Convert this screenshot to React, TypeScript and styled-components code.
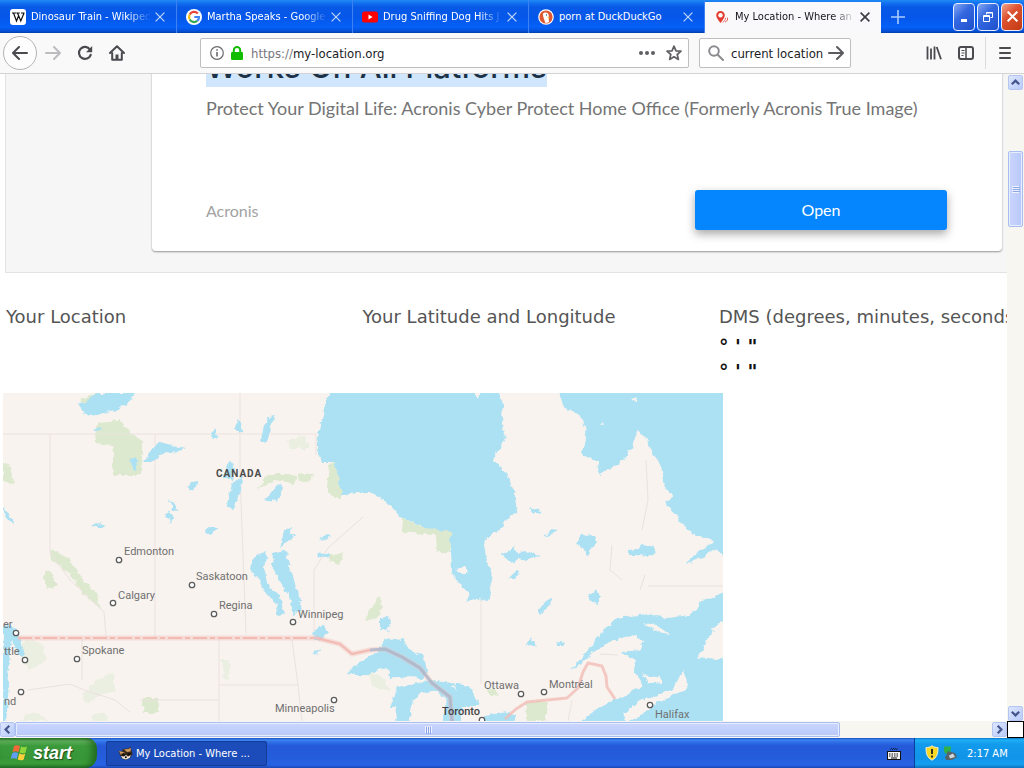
import React from "react";
import styled, { createGlobalStyle, css } from "styled-components";

const uiFont = '"DejaVu Sans Condensed", "Noto Sans", "Open Sans", sans-serif';
const adFont = 'Lato, "Open Sans", sans-serif';

const GlobalStyle = createGlobalStyle`
  * { box-sizing: border-box; }
  body { margin: 0; background: #fff; font-family: ${uiFont}; overflow: hidden; }
  button, input { font: inherit; color: inherit; border: 0; padding: 0; margin: 0; background: none; }
  svg { display: block; flex: none; }
`;

const Desktop = styled.div`
  display: flex;
  flex-direction: column;
  height: 100vh;
`;

/* ---------- tab strip ---------- */

const TabStrip = styled.div`
  display: flex;
  flex: none;
  height: 33px;
  padding-left: 1px;
  background: linear-gradient(#1e8af4 0, #1272f0 3px, #0859e6 7px, #0557ea 18px, #0561f8 27px, #0550d8 31px, #023fa8 33px);
`;

const TabItem = styled.div<{ $active?: boolean }>`
  display: flex;
  align-items: center;
  flex: 0 1 176px;
  min-width: 0;
  padding: 0 11px 0 9px;
  font-size: 11px;
  color: #fff;
  border-right: 1px solid #3f83f2;
  ${(p) =>
    p.$active &&
    css`
      margin-top: 2px;
      padding-bottom: 2px;
      background: #f9f9fb;
      color: #15141a;
      border-right: 0;
    `}
`;

const TabButton = styled.button`
  display: flex;
  align-items: center;
  gap: 5px;
  flex: 1;
  min-width: 0;
  text-align: left;
`;

const TabTitle = styled.span<{ $fade?: boolean }>`
  flex: 1;
  overflow: hidden;
  white-space: nowrap;
  ${(p) => p.$fade && "mask-image: linear-gradient(to right, #000 80%, transparent);"}
`;

const CloseTab = styled.button`
  margin-left: 4px;
`;

const NewTab = styled.button`
  width: 34px;
  display: grid;
  place-items: center;
`;

const WindowButtons = styled.div`
  display: flex;
  align-items: center;
  gap: 2px;
  margin-left: auto;
  padding-right: 1px;
`;

const WindowButton = styled.button<{ $danger?: boolean }>`
  display: grid;
  place-items: center;
  width: 22px;
  height: 28px;
  border: 1px solid #e8effc;
  border-radius: 4px;
  background: ${(p) =>
    p.$danger
      ? "linear-gradient(135deg, #f0a58c, #dd5230 40%, #c23a12)"
      : "linear-gradient(135deg, #86a9f3, #3468e0 40%, #1e50cc)"};
`;

/* ---------- toolbar ---------- */

const Toolbar = styled.div`
  display: flex;
  align-items: center;
  flex: none;
  height: 41px;
  padding: 0 3px;
  background: #f9f9fa;
  border-bottom: 1px solid #d3d3d5;
  color: #4a4a4f;
  font-size: 13px;
`;

const NavButtons = styled.div`
  display: flex;
  align-items: center;
  width: 197px;
`;

const IconButton = styled.button`
  display: grid;
  place-items: center;
  width: 32px;
  height: 32px;
`;

const StarButton = styled(IconButton)`
  width: 24px;
`;

const BackButton = styled(IconButton)`
  width: 34px;
  height: 34px;
  border: 1px solid #b4b4b7;
  border-radius: 50%;
  background: #fdfdfd;
`;

const Field = styled.div`
  display: flex;
  align-items: center;
  height: 30px;
  background: #fff;
  border: 1px solid #bfbfc2;
  border-radius: 2px;
  color: #1b1b1f;
  padding: 0 2px 0 9px;
`;

const UrlField = styled(Field)`
  flex: 1;
  gap: 7px;
  margin-right: 10px;
`;

const SearchField = styled(Field)`
  width: 152px;
  padding: 0 6px 0 8px;
`;

const UrlText = styled.span`
  display: flex;
  align-items: center;
  flex: 1;
  margin-left: 1px;
`;

const Scheme = styled.span`
  flex: none;
  color: #77777c;
`;

const TextInput = styled.input`
  flex: 1;
  min-width: 0;
  width: 40px;
  outline: 0;
`;

const SearchInput = styled(TextInput)`
  padding-left: 7px;
`;

const ToolGroup = styled.div`
  display: flex;
  align-items: center;
  margin-left: 67px;
`;

const Divider = styled.span`
  width: 1px;
  height: 32px;
  margin: 0 3px;
  background: #dcdcde;
`;

/* ---------- page ---------- */

const Viewport = styled.div`
  display: grid;
  grid-template: minmax(0, 1fr) 17px / minmax(0, 1fr) 17px;
  flex: 1;
  min-height: 0;
`;

const PageClip = styled.main`
  overflow: hidden;
  background: #fff;
`;

const AdBand = styled.section`
  margin: -41px 0 0 5px;
  padding: 0 5px 21px 146px;
  background: #f6f6f6;
  border: 1px solid #e3e3e3;
  border-right: 0;
`;

const AdCard = styled.article`
  padding: 13px 55px 21px 54px;
  background: #fff;
  border-radius: 4px;
  box-shadow: 0 1px 2px rgba(0, 0, 0, 0.4);
  font-family: ${adFont};
`;

const AdTitle = styled.h2`
  margin: 0;
  font: 500 31px/40px Inter, sans-serif;
  color: #1c3146;
`;

const Selected = styled.a`
  display: inline-block;
  background: #cfe6fd;
  color: inherit;
  text-decoration: none;
`;

const AdText = styled.p`
  margin: 9px 0 70px;
  font-size: 18px;
  line-height: 24px;
  color: #747474;
  white-space: nowrap;
`;

const AdFooter = styled.div`
  display: flex;
  align-items: center;
  justify-content: space-between;
  font-size: 16px;
  color: #a2a2a2;
`;

const OpenButton = styled.button`
  width: 252px;
  height: 40px;
  padding-bottom: 2px;
  border-radius: 3px;
  background: #0586ff;
  color: #fff;
  box-shadow: 0 4px 10px rgba(0, 0, 0, 0.35);
`;

const InfoGrid = styled.section`
  display: grid;
  grid-template-columns: repeat(3, 1fr);
  width: calc(106% + 8px);
  min-height: 120px;
  padding: 32px 0 5px 6px;
  font-family: "DejaVu Sans", sans-serif;
`;

const InfoTitle = styled.h3`
  margin: 0 0 5px;
  font-size: 18px;
  line-height: 24px;
  font-weight: 400;
  color: #555;
  white-space: nowrap;
`;

const Dms = styled.p`
  margin: 0;
  font-size: 19px;
  line-height: 25px;
  font-weight: 700;
  color: #111;
`;

const MapFrame = styled.figure`
  margin: 0 0 0 3px;
  font-family: "Roboto", sans-serif;
`;

/* ---------- scroll bars ---------- */

const Track = styled.div<{ $vertical?: boolean }>`
  display: flex;
  flex-direction: ${(p) => (p.$vertical ? "column" : "row")};
  background: #f7f6f1;
  ${(p) => (p.$vertical ? "padding: 1px 1px 0 1px;" : "padding: 1px 0;")}
`;

const arrowTurn = { up: 0, right: 90, down: 180, left: 270 };

const ScrollArrow = styled.button<{ $dir: keyof typeof arrowTurn }>`
  display: grid;
  place-items: center;
  flex: none;
  width: 15px;
  height: 15px;
  border: 1px solid #b4c5f3;
  border-radius: 2px;
  background: linear-gradient(135deg, #dde6ff, #b9cbf8);
  svg { transform: rotate(${(p) => arrowTurn[p.$dir]}deg); }
`;

const Thumb = styled.div<{ $vertical?: boolean }>`
  display: grid;
  place-items: center;
  border: 1px solid #a9bdf0;
  border-radius: 2px;
  box-shadow: inset 0 0 0 1px #e6edff;
  background: ${(p) =>
    p.$vertical ? "linear-gradient(90deg, #cad6fe, #b8c8f8)" : "linear-gradient(#cad6fe, #b8c8f8)"};
`;

const Space = styled.span<{ $grow: number }>`
  flex: ${(p) => p.$grow} 1 0;
`;

const VThumb = styled(Thumb)`
  flex: 74 1 0;
`;

const HThumb = styled(Thumb)`
  flex: 823 1 0;
`;

const Corner = styled.div`
  background: #fff;
  border: 1px solid #000;
`;

/* ---------- taskbar ---------- */

const Taskbar = styled.footer`
  display: flex;
  flex: none;
  height: 30px;
  background: linear-gradient(#1f4fc0 0, #3a86f0 2px, #2f6fe6 4px, #2459d8 8px, #245ddb 20px, #2663e4 27px, #1b47b4 30px);
  color: #fff;
  font-size: 11px;
`;

const StartButton = styled.button`
  display: flex;
  align-items: center;
  gap: 3px;
  width: 97px;
  padding-left: 10px;
  border-radius: 0 10px 12px 0;
  background: linear-gradient(#2c7d2b 0, #63b35f 3px, #3b9a3a 8px, #379637 20px, #3da03b 26px, #23762a 30px);
  box-shadow: inset -5px 0 6px rgba(20, 80, 20, 0.6);
  font: italic 700 18px "Liberation Sans", sans-serif;
  text-shadow: 1px 1px 1px #1d4d1d;
`;

const TaskButton = styled.button`
  display: flex;
  align-items: center;
  gap: 3px;
  width: 161px;
  height: 25px;
  margin: 3px 0 0 9px;
  padding-left: 11px;
  border: 1px solid #153c96;
  border-radius: 2px;
  background: #1c4cb9;
`;

const Keyboard = styled.span`
  display: grid;
  place-items: center;
  margin: 0 13px 0 auto;
`;

const Tray = styled.div`
  display: flex;
  align-items: center;
  gap: 4px;
  width: 110px;
  padding-left: 10px;
  border-left: 1px solid #0a3f97;
  background: linear-gradient(#0c79cc 0, #1fb0f5 2px, #129bec 6px, #1193e8 20px, #15a0f2 26px, #0d72bd 30px);
`;

const Clock = styled.time`
  margin-left: 6px;
`;

/* ---------- icons ---------- */

const Cross = ({ color, size = 10, weight = 1.3 }: { color: string; size?: number; weight?: number }) => (
  <svg width={size} height={size} viewBox="0 0 10 10" stroke={color} strokeWidth={weight}>
    <path d="M.6 .6 9.4 9.4M9.4 .6 .6 9.4" />
  </svg>
);

const Wikipedia = () => (
  <svg width="16" height="16" viewBox="0 0 16 16">
    <rect width="16" height="16" rx="3" fill="#fff" />
    <path d="M2 4h4M6.300 4h3.500M11 4h3.500M3.500 4l3 8 2-5M7.500 4l3.300 8L14 4" stroke="#111" strokeWidth="1.200" fill="none" />
  </svg>
);

const Google = () => (
  <svg width="16" height="16" viewBox="0 0 16 16">
    <circle cx="8" cy="8" r="8" fill="#fff" />
    <g fill="none" strokeWidth="2.200">
      <path d="M11.800 4.600A5 5 0 0 0 3.700 5.500" stroke="#ea4335" />
      <path d="M3.700 5.500a5 5 0 0 0 0 5" stroke="#fbbc05" />
      <path d="M3.700 10.500a5 5 0 0 0 7.500 1.400" stroke="#34a853" />
      <path d="M11.200 11.900A5 5 0 0 0 13 8H8.300" stroke="#4285f4" />
    </g>
  </svg>
);

const Youtube = () => (
  <svg width="16" height="16" viewBox="0 0 16 16">
    <rect y="2.500" width="16" height="11" rx="2.500" fill="#f00" />
    <path d="M6.500 5.600v4.800L10.600 8z" fill="#fff" />
  </svg>
);

const Duck = () => (
  <svg width="16" height="16" viewBox="0 0 16 16">
    <circle cx="8" cy="8" r="7.800" fill="#fff" />
    <circle cx="8" cy="8" r="6.600" fill="#de5833" />
    <path d="M5 4.600C6.500 2.600 10.600 3 10.800 6.500l-.2 2 .4 4.800-3.600.6C6.600 11.500 4.600 7.500 5 4.600z" fill="#fff" />
    <path d="M9.300 8.200l2.800.2-1.800 1.200z" fill="#fc3" />
    <circle cx="8.500" cy="6" r=".7" fill="#2d4f8e" />
  </svg>
);

const Pin = () => (
  <svg width="16" height="14" viewBox="-1 0 16 14">
    <path d="M5.500 13C3 9.500 1.200 7.600 1.200 5.200a4.300 4.300 0 0 1 8.600 0C9.800 7.600 8 9.500 5.500 13z" fill="#e33b2e" />
    <circle cx="5.500" cy="5.200" r="2.200" fill="#fff" />
    <path d="M8 12.500c1.500-2.500 2.500-2 2.500-4.500M12.500 7.500v2.800L10 12" stroke="#e8685d" fill="none" />
  </svg>
);

const Arrow = ({ color, flip }: { color: string; flip?: boolean }) => (
  <svg width="16" height="16" viewBox="0 0 16 16" fill="none" stroke={color} strokeWidth="2" strokeLinecap="round" strokeLinejoin="round">
    <path d={flip ? "M15 8H1M7 2 1 8l6 6" : "M1 8h14M9 2l6 6-6 6"} />
  </svg>
);

const Reload = () => (
  <svg width="16" height="16" viewBox="0 0 16 16">
    <path d="M13 4.600A6 6 0 1 0 13.700 9.800" fill="none" stroke="#4a4a4f" strokeWidth="2.200" strokeLinecap="round" />
    <path d="M15.200 1v6.200H9z" fill="#4a4a4f" />
  </svg>
);

const Home = () => (
  <svg width="16" height="16" viewBox="0 0 16 16" fill="none" stroke="#4a4a4f" strokeWidth="2" strokeLinecap="round" strokeLinejoin="round">
    <path d="M1 8 8 1.200 15 8M3.200 8v6.800h9.600V8" />
    <path d="M8 14V9.500" strokeWidth="3" strokeLinecap="butt" />
  </svg>
);

const Info = () => (
  <svg width="14" height="14" viewBox="0 0 14 14" fill="none" stroke="#6a6a6f">
    <circle cx="7" cy="7" r="6.300" strokeWidth="1.200" />
    <path d="M7 6v4.500M7 3.300v1.500" strokeWidth="1.600" />
  </svg>
);

const Lock = () => (
  <svg width="12" height="14" viewBox="0 0 12 14">
    <rect y="6" width="12" height="8" rx="1.200" fill="#12bc00" />
    <path d="M2.800 7V4.200a3.200 3.200 0 0 1 6.400 0V7" fill="none" stroke="#12bc00" strokeWidth="2" />
  </svg>
);

const Dots = () => (
  <svg width="16" height="16" viewBox="0 0 16 16" fill="#5f5f64">
    <circle cx="2" cy="8" r="2" />
    <circle cx="8" cy="8" r="2" />
    <circle cx="14" cy="8" r="2" />
  </svg>
);

const Star = () => (
  <svg width="16" height="16" viewBox="0 0 16 16" fill="none" stroke="#5f5f64" strokeWidth="1.700" strokeLinejoin="round">
    <path d="M8 1.200l2 4.600 5 .4-3.800 3.300 1.200 4.900L8 11.800l-4.400 2.600 1.200-4.900L1 6.200l5-.4z" />
  </svg>
);

const Magnifier = () => (
  <svg width="16" height="16" viewBox="0 0 16 16" fill="none" stroke="#8c8c90" strokeWidth="2" strokeLinecap="round">
    <circle cx="6" cy="6" r="4.800" />
    <path d="M9.700 9.700 15 15" />
  </svg>
);

const Library = () => (
  <svg width="16" height="16" viewBox="0 0 16 16" fill="none" stroke="#4a4a4f" strokeWidth="1.800">
    <path d="M1.500 1.500v13M5 3.500v11M8.500 1.500v13M10.700 2l4.300 12.300" />
  </svg>
);

const Sidebar = () => (
  <svg width="16" height="16" viewBox="0 0 16 16" fill="none" stroke="#4a4a4f">
    <rect x="1" y="2" width="14" height="12" rx="2" strokeWidth="2" />
    <path d="M8 2v12" strokeWidth="1.500" />
    <path d="M3.500 5.500h3M3.500 8h3M3.500 10.500h2" />
  </svg>
);

const Menu = () => (
  <svg width="12" height="14" viewBox="0 0 12 14" stroke="#4a4a4f" strokeWidth="2" strokeLinecap="round">
    <path d="M1 2h10M1 7h10M1 12h10" />
  </svg>
);

const Chevron = () => (
  <svg width="9" height="9" viewBox="0 0 9 9" fill="none" stroke="#44568c" strokeWidth="2.200">
    <path d="M.8 6.300 4.500 2.600 8.200 6.300" />
  </svg>
);

const Grip = ({ vertical }: { vertical?: boolean }) => (
  <svg width="8" height="8" viewBox="0 0 8 8" stroke="#eef3ff">
    <path d={vertical ? "M0 1h7M0 3h7M0 5h7M0 7h7" : "M1 0v7M3 0v7M5 0v7M7 0v7"} shapeRendering="crispEdges" />
    <path d={vertical ? "M1 2h7M1 4h7M1 6h7" : "M2 1v7M4 1v7M6 1v7"} stroke="#8ca5e6" shapeRendering="crispEdges" />
  </svg>
);

const WindowsFlag = () => (
  <svg width="20" height="20" viewBox="0 0 20 20">
    <path d="M4 3c2-1.300 4-1 6 0L8.500 9c-2-1-4-1.200-6 0z" fill="#ef6a38" />
    <path d="M11 3.600c2 1 4 1 6 0L15.500 9.400c-2 1.200-4 1-6 0z" fill="#8fd63a" />
    <path d="M2.200 10.200c2-1.200 4-1 6 0L6.700 16c-2-1-4-1-6 0z" fill="#5f9df5" />
    <path d="M9.200 10.600c2 1 4 1.200 6 0L13.700 16.400c-2 1.200-4 1-6 0z" fill="#fbd03b" />
  </svg>
);

const Raccoon = () => (
  <svg width="15" height="14" viewBox="0 0 15 14">
    <path d="M.5 4 4 4.500 5 2l5-.5L12.500 0l1 3L14.500 7 12 11l-4 2-4-1.500L2 8z" fill="#3a2a1c" />
    <path d="M1 4l4 1 2 1-4 2zM6 2.500l4-.5 3-1-.5 3.500L9 5z" fill="#d09a5e" />
    <path d="M3 7l3-1 1 2-2 1zM9 6.500l4-.5-1 2.500-2 0z" fill="#16110d" />
    <path d="M3 9l3 .5L8 8l2 1.500 3-1.500-1.500 3L8 12.500l-3.500-1z" fill="#efe6d8" />
    <circle cx="7.800" cy="10.300" r="1" />
  </svg>
);

const KeyboardIcon = () => (
  <svg width="14" height="13" viewBox="0 0 14 13">
    <path d="M3.500 2.500l1-1 1 1 1-1 1 1 1-1 1 1 1-1" stroke="#111" fill="none" />
    <rect x=".5" y="4.500" width="13" height="8" fill="#f4f4f4" stroke="#111" />
    <path d="M2 7h10M2 9h10" stroke="#111" strokeDasharray="1.500 1" />
    <path d="M4 11h6" stroke="#111" />
  </svg>
);

const Shield = () => (
  <svg width="14" height="16" viewBox="0 0 14 16">
    <path d="M7 .8c2 1.400 4 1.800 6 1.800 0 6-1 10-6 12.600C2 12.600 1 8.600 1 2.600c2 0 4-.4 6-1.800z" fill="#fbd722" stroke="#f3f0d2" />
    <path d="M7 4v5M7 10.500v2" stroke="#222" strokeWidth="1.800" />
  </svg>
);

const Device = () => (
  <svg width="14" height="16" viewBox="0 0 14 16">
    <path d="M1 6l4-1 3 2 4 1 2 4-5 3-6 0-1-3 2-2z" fill="#56636a" />
    <path d="M1 1.500h7L7.500 7 5 6 3.500 9 1 7z" fill="#2fb14a" />
    <path d="M6 10.500l4-2 2 3.500-5 1.500z" fill="#cfd8dc" />
  </svg>
);

/* ---------- map ---------- */

type City = { name: string; x: number; y: number; tx: number; ty: number };

const cities: City[] = [
  { name: "Edmonton", x: 119, y: 560, tx: 124, ty: 555 },
  { name: "Calgary", x: 113, y: 603, tx: 118, ty: 599 },
  { name: "Saskatoon", x: 192, y: 585, tx: 196, ty: 580 },
  { name: "Regina", x: 214, y: 614, tx: 219, ty: 609 },
  { name: "Winnipeg", x: 293, y: 622, tx: 298, ty: 618 },
  { name: "Spokane", x: 77, y: 659, tx: 82, ty: 654 },
  { name: "Minneapolis", x: 334, y: 700, tx: 275, ty: 712 },
  { name: "Ottawa", x: 521, y: 694, tx: 484, ty: 689 },
  { name: "Montréal", x: 544, y: 692, tx: 549, ty: 688 },
  { name: "Halifax", x: 650, y: 705, tx: 655, ty: 718 },
  { name: "er", x: 16, y: 633, tx: 3, ty: 628 },
  { name: "ttle", x: 25, y: 660, tx: 4, ty: 655 },
  { name: "nd", x: 21, y: 692, tx: 4, ty: 705 },
];

const lakes = [
  "M76 403L84 404 90 398 100 393H136L128 403 118 410 105 413 92 417 82 410z",
  "M143 462L152 450 160 442 172 445 186 448 178 452 162 454 150 462z",
  "M130 460l6-3 2 8-4 6z",
  "M93 429l8-3 3 3-8 2z",
  "M211 436l4-7 4 8-6 1z",
  "M234 430l4-11 5 14-5-2z",
  "M261 440l3-14 4-9 8-1-5 8-1 10-4 8z",
  "M222 478l8-18 4 8-2 12z",
  "M227 508l1-12 5-14 10-5-2 14-4 10-5 8z",
  "M265 501l6-8 9-10 3 6-5 10-10 3z",
  "M187 487l4-5 7-1-1 6-8 4z",
  "M168 499l6 4 5 8-6-1z",
  "M165 513l5-1 3 6-2 5z",
  "M90 525l14-1 2 3-13 0z",
  "M205 530l4-3 8 0-4 7-6 1z",
  "M3 505l5 8 7 11-8-5-4-7z",
  "M285 530l8-1-4 5 8 0-9 6-8 9 2-10z",
  "M320 538l6-3 5 1-5 4z",
  "M315 552l10 2 4 2-10 2z",
  "M285 550L273 553 272 567 278 580 290 597 293 615 302 610 298 590 290 567z",
  "M267 552L253 558 250 569 260 580 263 590 275 603 278 617 285 615 280 597 267 583 264 567z",
  "M314 632l9-7 5 7-6 7-9 0z",
  "M312 653l8-3-3 5z",
  "M530 507l7 1 4 7-9-3z",
  "M544 536l8-7 5 1-6 5z",
  "M501 554l8-2 4-6 5 7 8-1 15 4-14 4-8-2-8 5z",
  "M576 543l5-9 5 2 8-1 3 8-5 5-5 8-4-8z",
  "M629 550l9-1 4-6 6 4 6-1 2 8-10 2-10-1-7 0z",
  "M509 578l8-8 3 2-4 6z",
  "M538 611l6-8 8-6 1 4-7 8-5 5z",
  "M380 618l6-3 5 7-4 9-7-1z",
  "M590 596l5-7 5 7-3 8-5-1z",
  "M526 647l6-10 4 9-5-2z",
  "M556 642l5-1 3 4-6 0z",
  "M3 625l14 3 8 26-4 4-9-17-4 22 1 21-3 40H3z",
];

const parks = [
  "M80 400L98 393H112L95 403 82 408z",
  "M95 430L98 422 120 420 130 432 142 441V475H113V445L96 443z",
  "M3 463l7 3 3 16H3z",
  "M50 550l18 8 16 22 12 12 5 18-18-17-12-18-20-16z",
  "M46 570l6 2 4 14-9 2-3-9z",
  "M257 489l12-15 20 0 6 2-1 10-7-4-13-2z",
  "M297 474l17 0-5 9-11-2z",
  "M327 488l2-24 5-2 8 22 0 14-15-5z",
  "M402 518l20 9 30 4-2 21H437l-1-17-35-3z",
  "M365 616l8-12 7-8 2 12-6 11-9 1z",
  "M328 555l15-1-4 10-8-2z",
  "M143 698h15v15H143z",
  "M526 702h21v19H526z",
  "M487 690l8-2 3 8-8-2z",
];

const faintParks = [
  "M288 440l18-5 2 14-18 0z",
  "M25 640l18 4 4 16-18 10-10-15z",
  "M82 695l18-18 14-4 0 18-18 6-8 8z",
  "M222 660l8 0-1 20-6-2z",
  "M92 715l12-3 6 9H92z",
  "M20 720l14-8 18 9z",
  "M365 670l20 8 4 14-16-6z",
];

const seas = [
  "M330 390L325 408 321 422 317 437 317 450 322 462 333 462 339 477 342 496 357 492 370 493 380 498 390 505 400 517 423 527 450 532 452 570 457 583 470 593 466 603 477 599 488 601 493 580 487 562 483 540 500 530 510 515 518 512 513 490 507 473 493 461 500 450 506 437 502 423 503 403 497 390z",
  "M557 390L565 408 580 415 587 433 583 453 590 460 598 460 600 475 607 470 623 462 632 447 638 429 647 440 655 457 662 470 665 487 672 495 666 505 680 520 690 532 715 542 700 550 685 564 703 557 716 549 728 560V390z",
  "M570 672L587 652 600 635 617 618 647 614 667 618 690 615 703 600 728 592V616L715 627 708 637 703 650 697 657 728 660V725H577L593 712 615 699 627 695 643 685 633 670 636 660 620 652 640 650 643 640 633 635 613 640 593 652 583 662z",
  "M347 674L360 661 377 653 385 638 403 640 412 653 423 655 428 673 423 678 407 677 390 679 386 667 378 669 370 675 355 675z",
  "M390 708L397 687 413 684 430 680 450 683 470 686 479 706 462 706 460 725H442L446 700 438 690 420 693 412 700 408 725H395L396 708z",
  "M484 716L507 712 518 715 510 725H487z",
];

const islands = [
  "M643 623L657 625 670 634 658 632z",
  "M642 673L650 678 662 677 662 683 647 681z",
  "M622 716L637 702 650 697 670 691 677 683 683 670 688 685 684 691 673 694 650 708 634 721 626 720z",
  "M455 569l10-2 4 6-8 0z",
  "M475 393h5l-2 5z",
  "M600 425l3-3 1 4z",
  "M631 399l5-1 2 5z",
  "M451 686l4-1 1 5z",
];

const provinceLines =
  "M3 434H316M50 434V552L70 580 104 612 106 636M155 434V638M240 393V475L246 634M316 434V455M314 636V570L328 548 363 517M219 638V721M219 685H298M140 700H219M82 640V680M28 690L70 684 84 690 115 700 130 712M292 640L298 685 302 721M481 600V684M646 460L648 500 642 530M648 586H723M568 721L572 700M600 654L618 655M612 545L610 570 622 580M640 590L645 575";

const MapArt = () => (
  <svg width="720" height="328" viewBox="3 393 720 328" role="img" aria-label="Map of Canada">
    <defs>
      <filter id="coast" x="-2%" y="-2%" width="104%" height="104%">
        <feTurbulence type="fractalNoise" baseFrequency="0.16" numOctaves="3" seed="4" />
        <feDisplacementMap in="SourceGraphic" scale="6" xChannelSelector="R" yChannelSelector="G" />
      </filter>
    </defs>
    <rect x="3" y="393" width="720" height="328" fill="#f8f3ee" />
    <g filter="url(#coast)">
      <path d={faintParks.join("")} fill="#ebefe1" />
      <path d={parks.join("")} fill="#dce9ce" />
    </g>
    <path d={provinceLines} fill="none" stroke="#ebe1e0" />
    <g filter="url(#coast)">
      <path d={seas.join("")} fill="#ace1f4" />
      <path d={lakes.join("")} fill="#ace1f4" />
      <path d={islands.join("")} fill="#f8f3ee" />
    </g>
    <g fill="none" stroke="#f3b9b3" strokeLinejoin="round">
      <path d="M18 638H316L328 641 340 644 352 654 370 650 385 649 402 657 420 668 432 683 450 697 452 721" strokeWidth="5" opacity=".4" />
      <path d="M18 638H316" strokeWidth="2" strokeDasharray="14 3 5 3" />
      <path d="M316 638L328 641 340 644 352 654 370 650" strokeWidth="2" />
      <path d="M370 650L385 649 402 657 420 668 432 683 450 697 452 721" stroke="#a9b4c9" strokeWidth="3" opacity=".8" />
      <path d="M505 719L516 709 527 702 567 698 578 688 583 672 588 663 602 666 606 676 607 687 615 699" strokeWidth="3" opacity=".75" />
    </g>
    <text x="216" y="477" fontSize="10" fontWeight="700" letterSpacing="1" fill="#4c4c4c">
      CANADA
    </text>
    <g fontSize="11" fill="#707070">
      {cities.map((c) => (
        <text key={c.name} x={c.tx} y={c.ty}>
          {c.name}
        </text>
      ))}
      <text x="442" y="715" fontWeight="500" fill="#444">
        Toronto
      </text>
    </g>
    <g fill="#fff" stroke="#5c5c5c" strokeWidth="1.300">
      {cities.map((c) => (
        <circle key={c.name} cx={c.x} cy={c.y} r="2.700" />
      ))}
      <circle cx="482" cy="720" r="2.700" />
    </g>
  </svg>
);

/* ---------- app ---------- */

const tabs = [
  { title: "Dinosaur Train - Wikiped", icon: <Wikipedia />, fade: true },
  { title: "Martha Speaks - Google", icon: <Google />, fade: true },
  { title: "Drug Sniffing Dog Hits J", icon: <Youtube />, fade: true },
  { title: "porn at DuckDuckGo", icon: <Duck /> },
  { title: "My Location - Where an", icon: <Pin />, fade: true, active: true },
];

export default function App() {
  return (
    <Desktop>
      <GlobalStyle />
      <TabStrip>
        {tabs.map((t) => (
          <TabItem key={t.title} $active={t.active}>
            <TabButton>
              {t.icon}
              <TabTitle $fade={t.fade}>{t.title}</TabTitle>
            </TabButton>
            <CloseTab aria-label="Close tab">
              <Cross color={t.active ? "#3c3c40" : "#b9d4fb"} weight={t.active ? 1.6 : 1.3} />
            </CloseTab>
          </TabItem>
        ))}
        <NewTab aria-label="New tab">
          <svg width="14" height="14" viewBox="0 0 14 14" stroke="#a9cbfb" strokeWidth="1.600">
            <path d="M7 0v14M0 7h14" />
          </svg>
        </NewTab>
        <WindowButtons>
          <WindowButton aria-label="Minimize">
            <svg width="13" height="13" viewBox="0 0 13 13">
              <path d="M3 9h6v3H3z" fill="#fff" />
            </svg>
          </WindowButton>
          <WindowButton aria-label="Restore">
            <svg width="12" height="12" viewBox="0 0 12 12" fill="none" stroke="#fff">
              <path d="M4.500 3.500V1.500h6v5h-2M4.500 2h6" />
              <path d="M1.500 4.500h6v6h-6zM1.500 5.500h6" />
            </svg>
          </WindowButton>
          <WindowButton $danger aria-label="Close">
            <Cross color="#fff" size={11} weight={1.8} />
          </WindowButton>
        </WindowButtons>
      </TabStrip>

      <Toolbar>
        <NavButtons>
          <BackButton aria-label="Back">
            <Arrow flip color="#4a4a4f" />
          </BackButton>
          <IconButton aria-label="Forward">
            <Arrow color="#bdbdc0" />
          </IconButton>
          <IconButton aria-label="Reload">
            <Reload />
          </IconButton>
          <IconButton aria-label="Home">
            <Home />
          </IconButton>
        </NavButtons>
        <UrlField>
          <Info />
          <Lock />
          <UrlText>
            <Scheme>https://</Scheme>
            <TextInput aria-label="Address" defaultValue="my-location.org" />
          </UrlText>
          <Dots />
          <StarButton aria-label="Bookmark">
            <Star />
          </StarButton>
        </UrlField>
        <SearchField>
          <Magnifier />
          <SearchInput aria-label="Search" defaultValue="current location" />
          <Arrow color="#5a5a5f" />
        </SearchField>
        <ToolGroup>
          <IconButton aria-label="Library">
            <Library />
          </IconButton>
          <IconButton aria-label="Sidebars">
            <Sidebar />
          </IconButton>
          <Divider />
          <IconButton aria-label="Menu">
            <Menu />
          </IconButton>
        </ToolGroup>
      </Toolbar>

      <Viewport>
        <PageClip>
          <AdBand>
            <AdCard>
              <AdTitle>
                <Selected href="#">Works On All Platforms</Selected>
              </AdTitle>
              <AdText>
                Protect Your Digital Life: Acronis Cyber Protect Home Office (Formerly Acronis True Image)
              </AdText>
              <AdFooter>
                <span>Acronis</span>
                <OpenButton>Open</OpenButton>
              </AdFooter>
            </AdCard>
          </AdBand>
          <InfoGrid>
            <InfoTitle>Your Location</InfoTitle>
            <InfoTitle>Your Latitude and Longitude</InfoTitle>
            <div>
              <InfoTitle>DMS (degrees, minutes, seconds)</InfoTitle>
              <Dms>° ' "</Dms>
              <Dms>° ' "</Dms>
            </div>
          </InfoGrid>
          <MapFrame>
            <MapArt />
          </MapFrame>
        </PageClip>

        <Track $vertical>
          <ScrollArrow $dir="up" aria-label="Scroll up">
            <Chevron />
          </ScrollArrow>
          <Space $grow={61} />
          <VThumb $vertical>
            <Grip vertical />
          </VThumb>
          <Space $grow={480} />
          <ScrollArrow $dir="down" aria-label="Scroll down">
            <Chevron />
          </ScrollArrow>
        </Track>
        <Track>
          <ScrollArrow $dir="left" aria-label="Scroll left">
            <Chevron />
          </ScrollArrow>
          <HThumb>
            <Grip />
          </HThumb>
          <Space $grow={152} />
          <ScrollArrow $dir="right" aria-label="Scroll right">
            <Chevron />
          </ScrollArrow>
        </Track>
        <Corner />
      </Viewport>

      <Taskbar>
        <StartButton>
          <WindowsFlag />
          start
        </StartButton>
        <TaskButton>
          <Raccoon />
          My Location - Where ...
        </TaskButton>
        <Keyboard>
          <KeyboardIcon />
        </Keyboard>
        <Tray>
          <Shield />
          <Device />
          <Clock>2:17 AM</Clock>
        </Tray>
      </Taskbar>
    </Desktop>
  );
}
